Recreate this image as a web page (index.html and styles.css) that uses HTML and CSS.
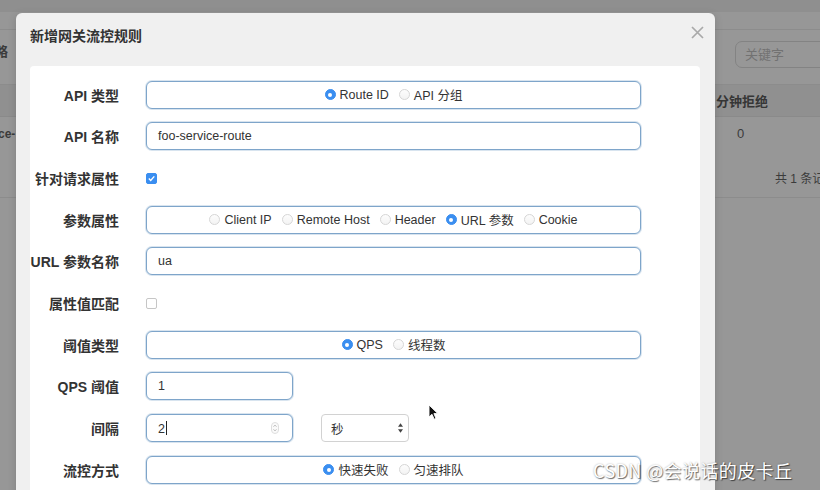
FILE: index.html
```html
<!DOCTYPE html>
<html lang="zh">
<head>
<meta charset="utf-8">
<title>新增网关流控规则</title>
<link rel="stylesheet" href="styles.css">
</head>
<body>
<div class="page">
  <div class="bg-strip"></div>
  <div class="bg-space"></div>
  <div class="bg-toolbar bg-grid">
    <div class="bg-left"><span class="clip-text">略</span></div>
    <div class="bg-right"><div class="search">关键字</div></div>
  </div>
  <div class="bg-thead bg-grid">
    <div class="bg-left"></div>
    <div class="bg-right"><span class="th">分钟拒绝</span></div>
  </div>
  <div class="bg-row bg-grid">
    <div class="bg-left"><span class="clip-text2">ce-</span></div>
    <div class="bg-right"><span class="num">0</span></div>
  </div>
  <div class="bg-foot bg-grid">
    <div class="bg-left"></div>
    <div class="bg-right"><span class="total">共 1 条记</span></div>
  </div>

  <div class="modal">
    <div class="modal-head">
      <h3 class="modal-title">新增网关流控规则</h3>
      <span class="close"><svg width="13" height="13" viewBox="0 0 13 13"><path d="M1 1 L12 12 M12 1 L1 12" stroke="#a9a9a9" stroke-width="1.7"/></svg></span>
    </div>
    <div class="panel">
      <div class="form-row">
        <label class="lbl">API 类型</label>
        <div class="box radios">
          <span class="opt"><i class="radio on"></i>Route ID</span>
          <span class="opt"><i class="radio"></i>API 分组</span>
        </div>
      </div>
      <div class="form-row">
        <label class="lbl">API 名称</label>
        <div class="box text">foo-service-route</div>
      </div>
      <div class="form-row">
        <label class="lbl">针对请求属性</label>
        <div class="cell"><span class="check on"><svg width="9" height="9" viewBox="0 0 9 9"><path d="M1.8 4.6 L3.7 6.5 L7.3 2.4" fill="none" stroke="#fff" stroke-width="1.4"/></svg></span></div>
      </div>
      <div class="form-row">
        <label class="lbl">参数属性</label>
        <div class="box radios">
          <span class="opt"><i class="radio"></i>Client IP</span>
          <span class="opt"><i class="radio"></i>Remote Host</span>
          <span class="opt"><i class="radio"></i>Header</span>
          <span class="opt"><i class="radio on"></i>URL 参数</span>
          <span class="opt"><i class="radio"></i>Cookie</span>
        </div>
      </div>
      <div class="form-row">
        <label class="lbl">URL 参数名称</label>
        <div class="box text">ua</div>
      </div>
      <div class="form-row">
        <label class="lbl">属性值匹配</label>
        <div class="cell"><span class="check"></span></div>
      </div>
      <div class="form-row">
        <label class="lbl">阈值类型</label>
        <div class="box radios">
          <span class="opt"><i class="radio on"></i>QPS</span>
          <span class="opt"><i class="radio"></i>线程数</span>
        </div>
      </div>
      <div class="form-row">
        <label class="lbl">QPS 阈值</label>
        <div class="cell"><div class="box text small">1</div></div>
      </div>
      <div class="form-row">
        <label class="lbl">间隔</label>
        <div class="cell inline">
          <div class="box text small spin"><span>2<span class="caret"></span></span>
            <svg class="spinner" width="8" height="12" viewBox="0 0 8 12"><rect x="0.5" y="0.5" width="7" height="11" rx="3.5" fill="#fafafa" stroke="#dedede"/><path d="M2.6 4.6 L4 3.2 L5.4 4.6 M2.6 7.4 L4 8.8 L5.4 7.4" fill="none" stroke="#a8a8a8" stroke-width="0.9"/></svg>
          </div>
          <div class="select"><span>秒</span>
            <svg width="7" height="12" viewBox="0 0 7 12"><path d="M3.5 1.2 L6 4.8 H1 Z M3.5 10.8 L6 7.2 H1 Z" fill="#444"/></svg>
          </div>
        </div>
      </div>
      <div class="form-row">
        <label class="lbl">流控方式</label>
        <div class="box radios">
          <span class="opt"><i class="radio on"></i>快速失败</span>
          <span class="opt"><i class="radio"></i>匀速排队</span>
        </div>
      </div>
    </div>
  </div>

  <svg class="pointer" width="11" height="17" viewBox="0 0 11 17"><path d="M1 1 L1 13 L4 10.3 L6.2 15.2 L8 14.4 L5.9 9.6 L9.8 9.6 Z" fill="#111" stroke="#fff" stroke-width="0.9"/></svg>
  <div class="watermark">CSDN @会说话的皮卡丘</div>
</div>
</body>
</html>
```
FILE: styles.css
```css
* { box-sizing: border-box; }
html, body { margin: 0; padding: 0; }
body {
  width: 820px;
  height: 490px;
  overflow: hidden;
  font-family: "Liberation Sans", "Noto Sans CJK SC", sans-serif;
  color: #333;
}
.page {
  position: relative;
  width: 820px;
  height: 490px;
  overflow: hidden;
  background: #979797;
  color: #3b3b3b;
}
.bg-strip { height: 12px; background: #8f8f8f; }
.bg-space { height: 18px; border-bottom: 1px solid #8c8c8c; }
.bg-grid {
  display: grid;
  grid-template-columns: 716px 1fr;
  align-items: center;
}
.bg-toolbar { height: 55px; border-bottom: 1px solid #8c8c8c; }
.bg-left { overflow: hidden; height: 100%; display: flex; align-items: center; }
.bg-right { height: 100%; display: flex; align-items: center; overflow: hidden; }
.clip-text { margin-left: -5px; font-size: 13px; font-weight: bold; margin-top: -14px; color: #3b3b3b; }
.search {
  margin-left: 19px;
  width: 110px;
  flex: none;
  height: 27px;
  border: 1px solid #838383;
  border-radius: 7px;
  font-size: 13px;
  color: #727272;
  padding-left: 9px;
  line-height: 25px;
  margin-top: -5px;
}
.bg-thead { height: 32px; background: #909090; border-bottom: 1px solid #8a8a8a; }
.th { font-size: 13px; font-weight: bold; color: #363636; }
.bg-row { height: 33px; }
.clip-text2 { font-size: 12px; font-weight: bold; margin-left: -2px; color: #3b3b3b; }
.num { margin-left: 21px; font-size: 13px; color: #3b3b3b; }
.bg-foot { height: 48px; border-bottom: 1px solid #8c8c8c; }
.total { margin-left: 59px; margin-top: 8px; font-size: 12px; color: #3b3b3b; white-space: nowrap; }

.modal {
  position: absolute;
  left: 16px;
  top: 13px;
  width: 699px;
  height: 500px;
  background: #f0f0f0;
  border-radius: 6px;
  box-shadow: 0 2px 8px rgba(0,0,0,0.15);
}
.modal-head {
  height: 53px;
  display: flex;
  justify-content: space-between;
  align-items: flex-start;
  padding: 14px 11px 0 14px;
}
.modal-title {
  margin: 0;
  font-size: 14px;
  line-height: 18px;
  font-weight: bold;
  color: #333;
}
.close { margin-top: -2px; display: block; height: 13px; }
.panel {
  margin: 0 15px 0 14px;
  background: #fff;
  border-radius: 4px;
  padding-top: 8px;
  height: 440px;
}
.form-row {
  height: 41.67px;
  display: grid;
  grid-template-columns: 89px 495px;
  column-gap: 27px;
  align-items: center;
}
.lbl {
  text-align: right;
  font-size: 14px;
  font-weight: bold;
  color: #333;
  white-space: nowrap;
}
.box {
  height: 28px;
  border: 1px solid #7ea5ca;
  box-shadow: 0 0 0 1px rgba(126,165,202,0.3);
  border-radius: 6px;
  background: #fff;
  font-size: 12.5px;
  color: #333;
}
.text { padding-left: 11px; display: flex; align-items: center; }
.small { width: 147px; }
.spin { justify-content: space-between; padding-right: 13px; }
.caret { display: inline-block; width: 1px; height: 14px; background: #222; vertical-align: -2px; margin-left: 1px; }
.radios {
  display: flex;
  justify-content: center;
  align-items: center;
  gap: 10px;
  padding-left: 0;
}
.opt { display: inline-flex; align-items: center; gap: 4px; white-space: nowrap; }
.radio {
  width: 11px;
  height: 11px;
  border-radius: 50%;
  border: 1px solid #d6d6d6;
  background: linear-gradient(#fdfdfd, #f3f3f3);
  display: inline-block;
  position: relative;
}
.radio.on {
  border-color: #3a8ef0;
  background: #3a8ef0;
}
.radio.on::after {
  content: "";
  position: absolute;
  left: 2.5px;
  top: 2.5px;
  width: 4px;
  height: 4px;
  border-radius: 50%;
  background: #fff;
}
.cell { display: flex; align-items: center; }
.inline { gap: 28px; }
.check {
  width: 11px;
  height: 11px;
  border-radius: 2px;
  border: 1px solid #c6c6c6;
  background: #fff;
  display: flex;
  align-items: center;
  justify-content: center;
}
.check.on { background: #3a8ef0; border-color: #3a8ef0; }
.select {
  width: 88px;
  height: 28px;
  border: 1px solid #d2d2d2;
  border-radius: 4px;
  background: #fff;
  display: flex;
  align-items: center;
  justify-content: space-between;
  padding: 0 4px 0 9px;
  font-size: 12.5px;
  color: #333;
}
.pointer { position: absolute; left: 428px; top: 404px; }
.watermark {
  position: absolute;
  left: 593px;
  top: 457px;
  font-family: "Noto Sans CJK SC", sans-serif;
  font-size: 18px;
  color: #fff;
  letter-spacing: 0.4px;
  text-shadow: 1px 1px 1px rgba(0,0,0,0.55), 0 0 2px rgba(0,0,0,0.3);
  white-space: nowrap;
}
```
